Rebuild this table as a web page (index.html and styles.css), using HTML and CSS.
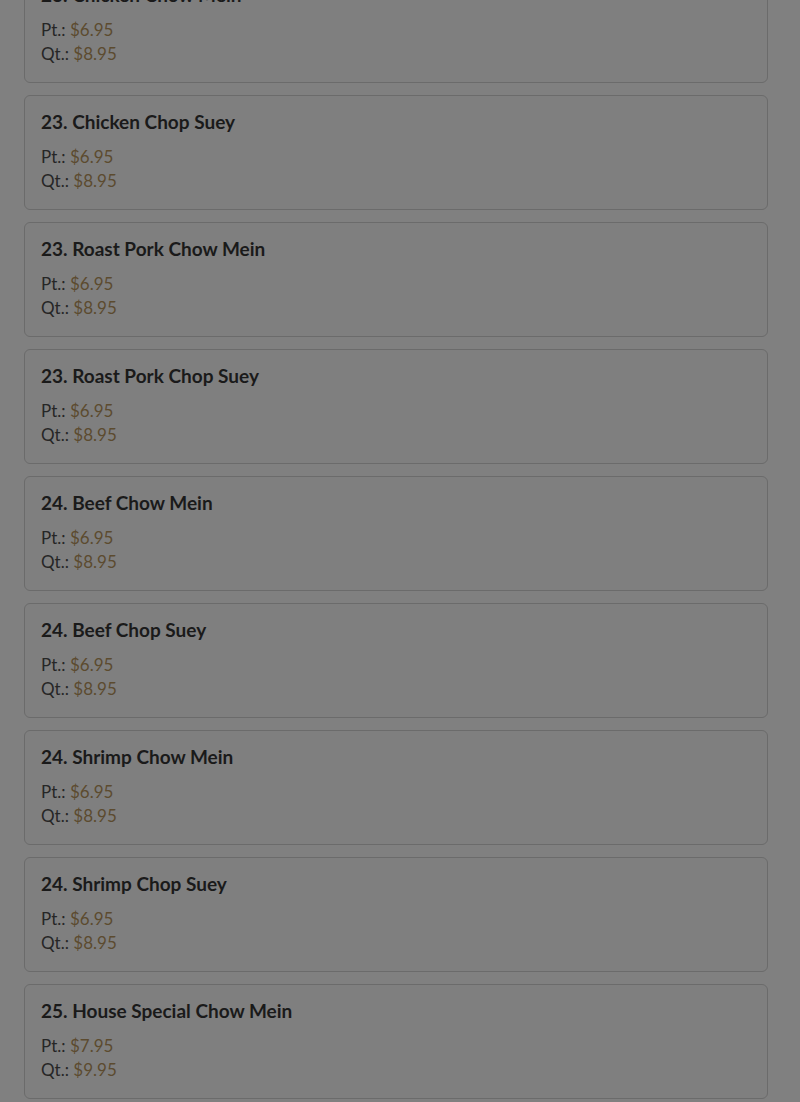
FILE: index.html
```html
<!DOCTYPE html>
<html lang="en">
<head>
<meta charset="utf-8">
<title>Menu</title>
<link rel="stylesheet" href="styles.css">
</head>
<body>
<main class="menu">
  <article class="card">
    <h3 class="title">23. Chicken Chow Mein</h3>
    <div class="price">Pt.: <span class="amt">$6.95</span></div>
    <div class="price">Qt.: <span class="amt">$8.95</span></div>
  </article>
  <article class="card">
    <h3 class="title">23. Chicken Chop Suey</h3>
    <div class="price">Pt.: <span class="amt">$6.95</span></div>
    <div class="price">Qt.: <span class="amt">$8.95</span></div>
  </article>
  <article class="card">
    <h3 class="title">23. Roast Pork Chow Mein</h3>
    <div class="price">Pt.: <span class="amt">$6.95</span></div>
    <div class="price">Qt.: <span class="amt">$8.95</span></div>
  </article>
  <article class="card">
    <h3 class="title">23. Roast Pork Chop Suey</h3>
    <div class="price">Pt.: <span class="amt">$6.95</span></div>
    <div class="price">Qt.: <span class="amt">$8.95</span></div>
  </article>
  <article class="card">
    <h3 class="title">24. Beef Chow Mein</h3>
    <div class="price">Pt.: <span class="amt">$6.95</span></div>
    <div class="price">Qt.: <span class="amt">$8.95</span></div>
  </article>
  <article class="card">
    <h3 class="title">24. Beef Chop Suey</h3>
    <div class="price">Pt.: <span class="amt">$6.95</span></div>
    <div class="price">Qt.: <span class="amt">$8.95</span></div>
  </article>
  <article class="card">
    <h3 class="title">24. Shrimp Chow Mein</h3>
    <div class="price">Pt.: <span class="amt">$6.95</span></div>
    <div class="price">Qt.: <span class="amt">$8.95</span></div>
  </article>
  <article class="card">
    <h3 class="title">24. Shrimp Chop Suey</h3>
    <div class="price">Pt.: <span class="amt">$6.95</span></div>
    <div class="price">Qt.: <span class="amt">$8.95</span></div>
  </article>
  <article class="card">
    <h3 class="title">25. House Special Chow Mein</h3>
    <div class="price">Pt.: <span class="amt">$7.95</span></div>
    <div class="price">Qt.: <span class="amt">$9.95</span></div>
  </article>
</main>
</body>
</html>
```
FILE: styles.css
```css
html, body {
  margin: 0;
  padding: 0;
  background: #808080;
  overflow: hidden;
}
body {
  font-family: "Lato", "Noto Sans", sans-serif;
  color: #1c1c1c;
}
.menu {
  display: flex;
  flex-direction: column;
  gap: 12px;
  padding: 0 32px 0 24px;
  margin-top: -32px;
}
.card {
  border: 1px solid #6b6b6b;
  border-radius: 6px;
  background: #7f7f7f;
  padding: 16px;
  height: 115px;
  box-sizing: border-box;
}
.title {
  margin: 0 0 14px;
  font-size: 19px;
  line-height: 19px;
  font-weight: 700;
  color: #1a1a1a;
}
.price {
  font-size: 17px;
  line-height: 24px;
  color: #262626;
}
.amt {
  color: #5c4b2f;
}
```
